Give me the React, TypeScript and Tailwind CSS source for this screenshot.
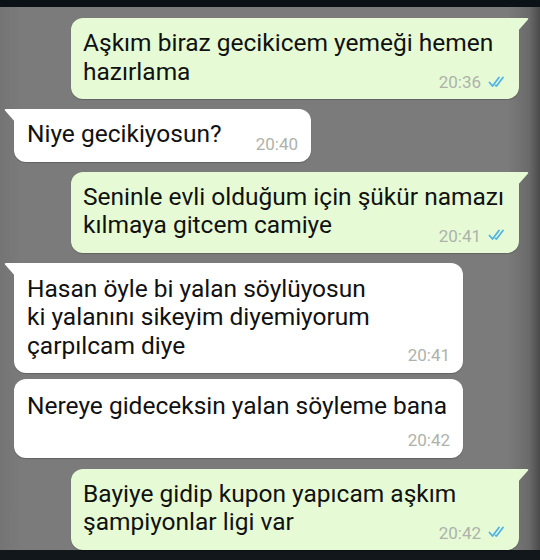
import React from "react";

const font = { fontFamily: "Roboto, 'Noto Sans', 'Liberation Sans', sans-serif" };

function Checks() {
  return (
    <svg width="20" height="12" viewBox="0 0 20 12" className="ml-[7px] mb-[1px]">
      <path d="M1.5 6.5 L4.5 10 L11 1.5" fill="none" stroke="#4fb3e6" strokeWidth="1.8" strokeLinecap="round" strokeLinejoin="round" />
      <path d="M7.5 9.5 L8.5 10 L15 1.5" fill="none" stroke="#4fb3e6" strokeWidth="1.8" strokeLinecap="round" strokeLinejoin="round" />
    </svg>
  );
}

function SentTail() {
  return (
    <svg width="12" height="14" viewBox="0 0 12 14" className="absolute -right-[10px] top-0">
      <path d="M0 0 H10 Q12 0 11 1.5 L0 14 Z" fill="#e6fbd5" />
    </svg>
  );
}

function RecvTail() {
  return (
    <svg width="12" height="14" viewBox="0 0 12 14" className="absolute -left-[10px] top-0">
      <path d="M12 0 H2 Q0 0 1 1.5 L12 14 Z" fill="#ffffff" />
    </svg>
  );
}

function Time({ t, sent }: { t: string; sent?: boolean }) {
  return (
    <div className="flex items-center justify-end h-[20px]">
      <span className="text-[17px] leading-[20px] text-[#aeb2ab]">{t}</span>
      {sent && <Checks />}
    </div>
  );
}

function Sent({ lines, t, mt }: { lines: string[]; t: string; mt: string }) {
  return (
    <div className={`relative ml-[71px] w-[448px] bg-[#e6fbd5] rounded-[12px] rounded-tr-none pl-[12px] pr-[11px] pt-[11px] pb-[7px] shadow-[0_1px_1px_rgba(0,0,0,0.2)] ${mt}`}>
      <SentTail />
      <div className="text-[24.5px] leading-[28.5px] text-[#111111] whitespace-nowrap">
        {lines.map((l, i) => (
          <div key={i}>{l}</div>
        ))}
      </div>
      <div className="-mt-[14px]">
        <Time t={t} sent />
      </div>
    </div>
  );
}

export default function App() {
  return (
    <div
      style={font}
      className="w-[540px] h-[560px] overflow-hidden flex flex-col bg-[linear-gradient(to_right,#747474,#7b7b7b_4%,#7b7b7b_94%,#6a6a6a_98%,#4a4a4a)]"
    >
      <div className="h-[7px] bg-[#0c1117] shrink-0" />
      <div className="flex-1 flex flex-col pt-[11px]">
        <Sent lines={["Aşkım biraz gecikicem yemeği hemen", "hazırlama"]} t="20:36" mt="" />

        <div className="relative ml-[14px] mt-[10px] w-[297px] bg-white rounded-[12px] rounded-tl-none pl-[13px] pr-[13px] pt-[11px] pb-[8px] flex items-end justify-between shadow-[0_1px_1px_rgba(0,0,0,0.2)]">
          <RecvTail />
          <div className="text-[24.5px] leading-[28.5px] text-[#111111] mb-[5px] whitespace-nowrap">Niye gecikiyosun?</div>
          <Time t="20:40" />
        </div>

        <Sent lines={["Seninle evli olduğum için şükür namazı", "kılmaya gitcem camiye"]} t="20:41" mt="mt-[10px]" />

        <div className="relative ml-[14px] mt-[10px] w-[449px] bg-white rounded-[12px] rounded-tl-none pl-[13px] pr-[13px] pt-[12px] pb-[8px] shadow-[0_1px_1px_rgba(0,0,0,0.2)]">
          <RecvTail />
          <div className="text-[24.5px] leading-[28.5px] text-[#111111] whitespace-nowrap">
            <div>Hasan öyle bi yalan söylüyosun</div>
            <div>ki yalanını sikeyim diyemiyorum</div>
            <div>çarpılcam diye</div>
          </div>
          <div className="-mt-[15px]">
            <Time t="20:41" />
          </div>
        </div>

        <div className="relative ml-[14px] mt-[6px] w-[449px] bg-white rounded-[12px] pl-[13px] pr-[13px] pt-[13px] pb-[8px] shadow-[0_1px_1px_rgba(0,0,0,0.2)]">
          <div className="text-[24.5px] leading-[28.5px] text-[#111111] whitespace-nowrap">Nereye gideceksin yalan söyleme bana</div>
          <div className="mt-[9px]">
            <Time t="20:42" />
          </div>
        </div>

        <Sent lines={["Bayiye gidip kupon yapıcam aşkım", "şampiyonlar ligi var"]} t="20:42" mt="mt-[11px]" />
      </div>
      <div className="h-[11px] bg-[#12171c] shrink-0" />
    </div>
  );
}
